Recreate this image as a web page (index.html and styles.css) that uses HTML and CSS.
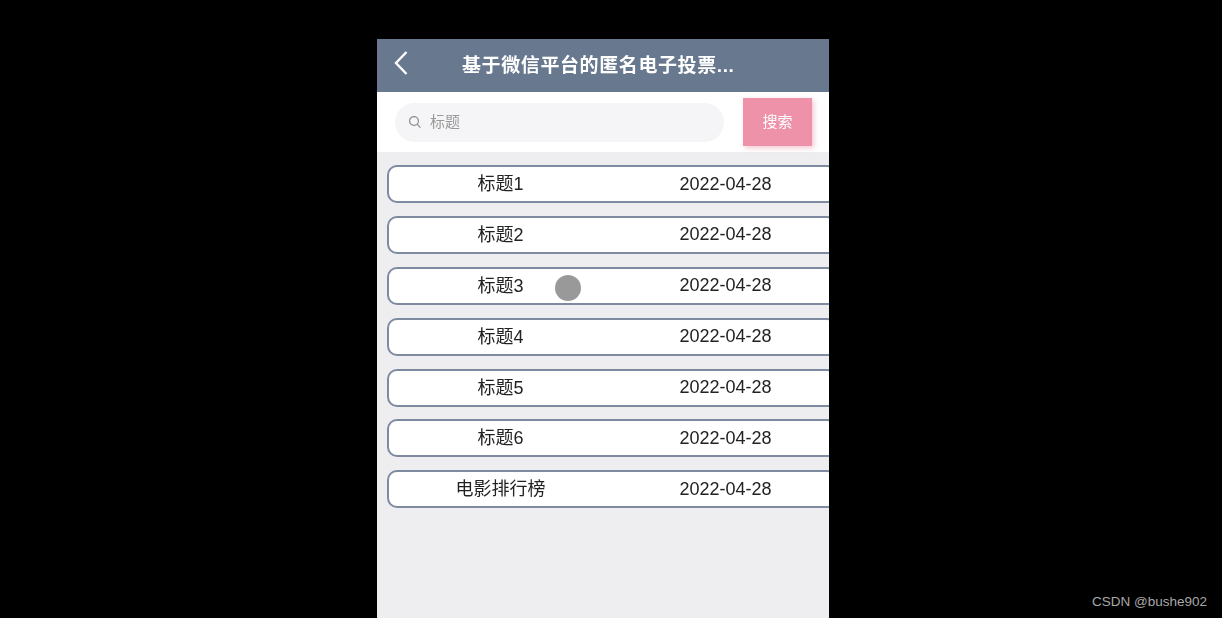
FILE: index.html
```html
<!DOCTYPE html>
<html lang="zh">
<head>
  <meta charset="UTF-8">
  <title>基于微信平台的匿名电子投票</title>
  <link rel="stylesheet" href="styles.css">
</head>
<body>
  <div class="phone">
    <header class="topbar">
      <svg class="back" width="16" height="26" viewBox="0 0 16 26">
        <path d="M13.5 2 L3 13 L13.5 24" fill="none" stroke="#fff" stroke-width="2.4"/>
      </svg>
      <h1 class="title">基于微信平台的匿名电子投票...</h1>
    </header>
    <div class="search-row">
      <div class="search-box">
        <svg class="search-icon" width="14" height="14" viewBox="0 0 14 14">
          <circle cx="6" cy="6" r="4.4" fill="none" stroke="#8a8a8a" stroke-width="1.2"/>
          <path d="M9.4 9.4 L12.4 12.6" stroke="#8a8a8a" stroke-width="1.2"/>
        </svg>
        <span class="placeholder">标题</span>
      </div>
      <button class="search-btn">搜索</button>
    </div>
    <main class="list">
      <div class="item"><span class="name">标题1</span><span class="date">2022-04-28</span></div>
      <div class="item"><span class="name">标题2</span><span class="date">2022-04-28</span></div>
      <div class="item"><span class="name">标题3</span><span class="date">2022-04-28</span></div>
      <div class="item"><span class="name">标题4</span><span class="date">2022-04-28</span></div>
      <div class="item"><span class="name">标题5</span><span class="date">2022-04-28</span></div>
      <div class="item"><span class="name">标题6</span><span class="date">2022-04-28</span></div>
      <div class="item"><span class="name">电影排行榜</span><span class="date">2022-04-28</span></div>
    </main>
    <div class="touch-dot"></div>
  </div>
  <div class="watermark">CSDN @bushe902</div>
</body>
</html>
```

FILE: styles.css
```css
* {
  margin: 0;
  padding: 0;
  box-sizing: border-box;
}
html, body {
  height: 100%;
  overflow: hidden;
}
body {
  background: #000;
  font-family: "Liberation Sans", "Noto Sans CJK SC", sans-serif;
  padding: 39px 0 0 377px;
}
.phone {
  position: relative;
  width: 452px;
  height: 579px;
  background: #eeeef0;
  overflow: hidden;
  filter: blur(0.5px);
}
.topbar {
  height: 53px;
  background: #68788e;
  display: flex;
  align-items: center;
  padding-left: 16px;
}
.back {
  flex: none;
  margin-top: -5px;
}
.title {
  margin-left: 53px;
  margin-top: -5px;
  font-size: 19px;
  font-weight: bold;
  letter-spacing: 0.6px;
  color: #fff;
  white-space: nowrap;
}
.search-row {
  height: 60px;
  background: #fff;
  display: flex;
  align-items: center;
  padding-left: 18px;
}
.search-box {
  width: 329px;
  height: 39px;
  border-radius: 20px;
  background: #f5f5f7;
  display: flex;
  align-items: center;
  padding-left: 13px;
}
.search-icon {
  flex: none;
}
.placeholder {
  margin-left: 8px;
  padding-bottom: 4px;
  font-size: 15px;
  color: #999;
}
.search-btn {
  width: 69px;
  height: 48px;
  margin-left: 19px;
  padding-bottom: 4px;
  border: none;
  background: #ee92aa;
  box-shadow: 2px 2px 5px rgba(238, 146, 170, 0.5);
  color: #fff;
  font-family: inherit;
  font-size: 15px;
}
.list {
  padding: 13px 0 0 10px;
  display: flex;
  flex-direction: column;
  gap: 12.9px;
}
.item {
  width: 450px;
  height: 38px;
  flex: none;
  background: #fff;
  border: 2px solid #7d8aa0;
  border-radius: 10px;
  display: grid;
  grid-template-columns: 1fr 1fr;
  align-items: center;
  text-align: center;
  font-size: 18px;
  color: #222;
}
.name {
  padding-bottom: 4px;
}
.date {
  padding-left: 4px;
}
.touch-dot {
  position: absolute;
  left: 178px;
  top: 236px;
  width: 26px;
  height: 26px;
  border-radius: 50%;
  background: #999;
}
.watermark {
  position: absolute;
  right: 15px;
  top: 594px;
  font-size: 13.5px;
  line-height: 16px;
  color: #a8a8a8;
}
```
